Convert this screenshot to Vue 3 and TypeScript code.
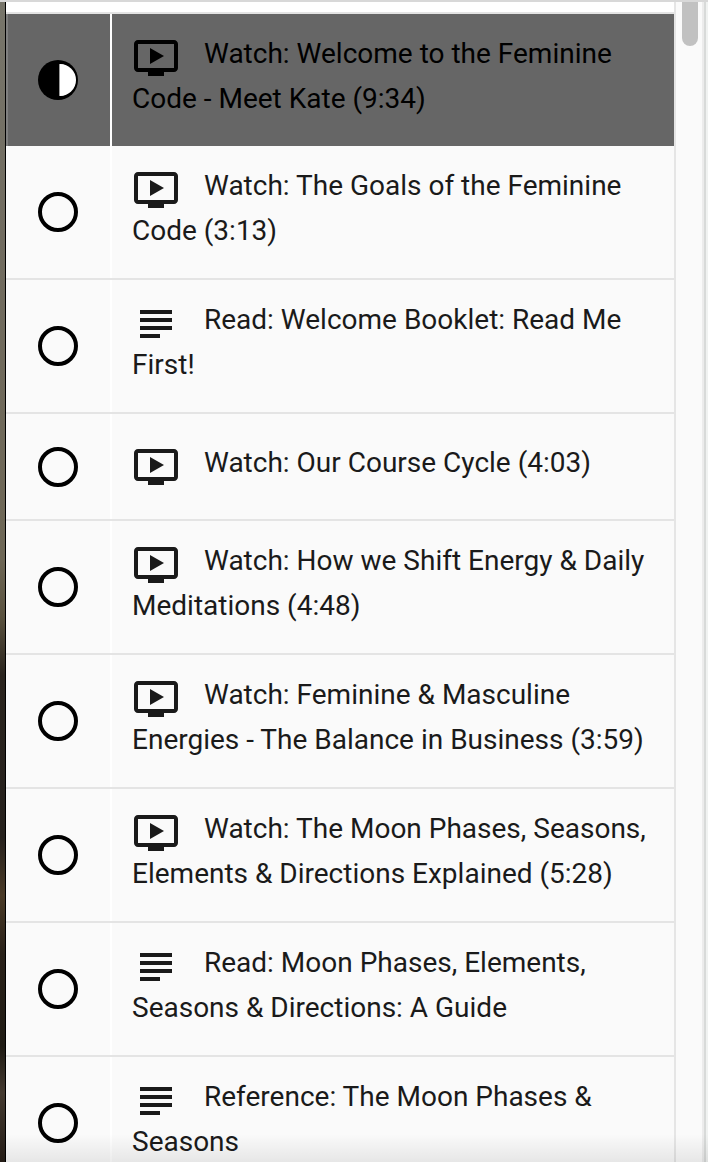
<script setup lang="ts">
import { ref } from 'vue'

type Kind = 'video' | 'text'
interface Lesson {
  kind: Kind
  title: string
  status: 'started' | 'open'
}

const active = ref(0)
const lessons = ref<Lesson[]>([
  { kind: 'video', title: 'Watch: Welcome to the Feminine Code - Meet Kate (9:34)', status: 'started' },
  { kind: 'video', title: 'Watch: The Goals of the Feminine Code (3:13)', status: 'open' },
  { kind: 'text', title: 'Read: Welcome Booklet: Read Me First!', status: 'open' },
  { kind: 'video', title: 'Watch: Our Course Cycle (4:03)', status: 'open' },
  { kind: 'video', title: 'Watch: How we Shift Energy & Daily Meditations (4:48)', status: 'open' },
  { kind: 'video', title: 'Watch: Feminine & Masculine Energies - The Balance in Business (3:59)', status: 'open' },
  { kind: 'video', title: 'Watch: The Moon Phases, Seasons, Elements & Directions Explained (5:28)', status: 'open' },
  { kind: 'text', title: 'Read: Moon Phases, Elements, Seasons & Directions: A Guide', status: 'open' },
  { kind: 'text', title: 'Reference: The Moon Phases & Seasons', status: 'open' },
])
</script>

<template>
  <div class="page">
    <div class="photo"></div>
    <main class="panel">
      <ul class="lessons">
        <li v-for="(lesson, i) in lessons" :key="lesson.title" class="lesson" :class="{ active: i === active }">
          <div class="state">
            <button type="button" class="toggle" :aria-label="'Progress of ' + lesson.title">
              <svg viewBox="0 0 40 40" aria-hidden="true">
                <template v-if="lesson.status === 'started'">
                  <circle cx="20" cy="20" r="20" fill="#000" />
                  <path d="M21 4A16 16 0 0 1 21 36Z" fill="#999" />
                  <path d="M22 4A16 16 0 0 1 22 36Z" fill="#fff" />
                </template>
                <circle v-else cx="20" cy="20" r="18" fill="none" stroke="#000" stroke-width="4" />
              </svg>
            </button>
          </div>
          <a href="#" class="title" @click.prevent="active = i">
            <span class="label">
              <svg class="icon" viewBox="0 0 24 24" aria-hidden="true">
                <path
                  v-if="lesson.kind === 'video'"
                  d="M21 3H3c-1.11 0-2 .89-2 2v12c0 1.1.89 2 2 2h5v2h8v-2h5c1.1 0 1.99-.9 1.99-2L23 5c0-1.11-.9-2-2-2zm0 14H3V5h18v12zM9 7v8l7-4z"
                />
                <path v-else d="M4 5h16v2H4zM4 9h16v2H4zM4 13h16v2H4zM4 17h10v2H4z" />
              </svg>{{ lesson.title }}</span>
          </a>
        </li>
      </ul>
    </main>
    <div class="gutter">
      <div class="thumb"></div>
    </div>
    <div class="fade"></div>
  </div>
</template>

<style>
body {
  margin: 0;
}
</style>

<style scoped>
.page {
  position: relative;
  display: flex;
  box-sizing: border-box;
  height: 100vh;
  overflow: hidden;
  border-top: 2px solid #d8d8d8;
  background: #fafafa;
  color: #1a1a1a;
  font-family: Roboto, "Liberation Sans", sans-serif;
  font-size: 28px;
  line-height: 45px;
}
.photo {
  flex: none;
  width: 5px;
  border-right: 1px solid #000;
  background: linear-gradient(#77756a, #716c60 20%, #6e6756 48%, #5a523f 53%, #2a241e 58%, #26211d 72%, #4a3a27 77%, #292119 82%, #1f1b14 90%, #443a30 94%, #241c16);
}
.panel {
  flex: 1;
  min-width: 0;
  border-right: 2px solid #e5e5e5;
}
.lessons {
  margin: 0;
  padding: 10px 0 0;
  list-style: none;
  background: linear-gradient(#fff, #fff) top / 100% 10px no-repeat;
}
.lesson {
  display: flex;
  border-bottom: 2px solid #e4e4e4;
}
.lesson.active {
  border-top: 2px solid #e4e4e4;
  border-bottom: 0;
  background: #666;
  color: #000;
}
.state {
  display: flex;
  flex: none;
  align-items: center;
  justify-content: center;
  box-sizing: border-box;
  width: 106px;
  border-right: 2px solid #fff;
}
.active .state {
  box-shadow: inset 2px 0 #808080;
}
.toggle {
  display: block;
  width: 40px;
  height: 40px;
  padding: 0;
  border: 0;
  border-radius: 50%;
  background: none;
  cursor: pointer;
}
.toggle svg {
  display: block;
  width: 100%;
  height: 100%;
}
.title {
  display: flex;
  flex: 1;
  align-items: center;
  box-sizing: border-box;
  min-width: 0;
  min-height: 105px;
  padding: 17px 16px 25px 20px;
  color: inherit;
  text-decoration: none;
}
.icon {
  width: 48px;
  height: 48px;
  margin: 0 24px -8px 0;
  vertical-align: -11px;
  fill: currentColor;
}
.gutter {
  display: flex;
  flex: none;
  justify-content: center;
  box-sizing: border-box;
  width: 32px;
  padding-right: 2px;
  border-right: 2px solid #f0f2f1;
  box-shadow: inset -2px 0 #d8dad9, inset -4px 0 #ececec;
}
.thumb {
  width: 16px;
  height: 44px;
  border-radius: 0 0 8px 8px;
  background: #c1c1c1;
}
.fade {
  position: absolute;
  right: 0;
  bottom: 0;
  left: 6px;
  height: 28px;
  background: linear-gradient(rgba(0, 0, 0, 0), rgba(0, 0, 0, 0.08));
  pointer-events: none;
}
</style>
